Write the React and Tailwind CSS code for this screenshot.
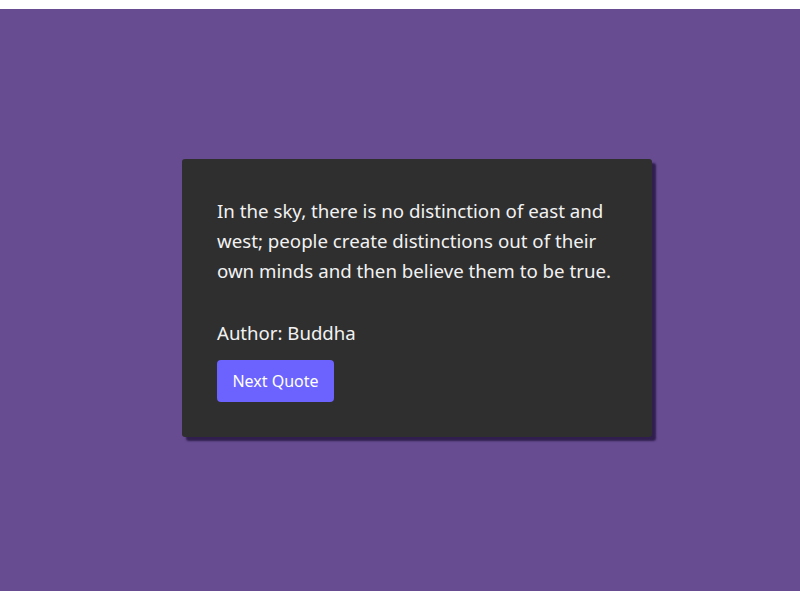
import React, { useState } from 'react';

const quotes = [
  {
    text: 'In the sky, there is no distinction of east and west; people create distinctions out of their own minds and then believe them to be true.',
    author: 'Buddha',
  },
  {
    text: 'The mind is everything. What you think you become.',
    author: 'Buddha',
  },
];

const App = () => {
  const [index, setIndex] = useState(0);
  const quote = quotes[index];

  return (
    <div className="h-screen bg-white py-[9px]" style={{ fontFamily: '"Noto Sans", "Open Sans", sans-serif' }}>
      <div className="h-full bg-[#674c91] flex items-center justify-center pl-[34px] pb-[4px]">
        <div className="w-[470px] bg-[#2f2f2f] rounded-[3px] px-[35px] pt-[37px] pb-[35px] shadow-[4px_4px_2px_rgba(38,22,66,0.85)]">
          <p className="text-[18.7px] leading-[30px] text-[#f2f2f2]">{quote.text}</p>
          <p className="mt-[32px] text-[18.6px] leading-[30px] text-[#f2f2f2]">Author: {quote.author}</p>
          <button
            onClick={() => setIndex((index + 1) % quotes.length)}
            className="mt-[12px] h-[42px] w-[117px] bg-[#6c63ff] text-white text-[16px] rounded-[4px] flex items-center justify-center"
          >
            Next Quote
          </button>
        </div>
      </div>
    </div>
  );
};

export default App;
